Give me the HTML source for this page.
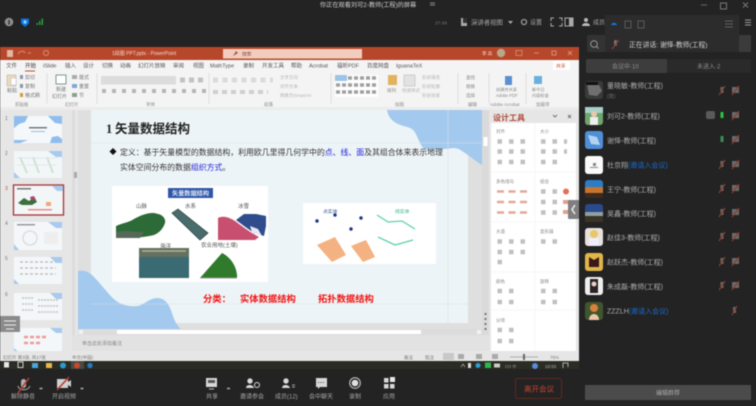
<!DOCTYPE html>
<html lang="zh-CN">
<head>
<meta charset="utf-8">
<title>会议屏幕共享</title>
<style>
html,body{margin:0;padding:0;width:756px;height:406px;overflow:hidden;background:#232323}
svg{display:block;filter:blur(.4px)}
text{font-family:"Liberation Sans","Noto Sans CJK SC",sans-serif}
.r{font-size:5px;fill:#777}
.t{font-size:5.5px;fill:#555}
.g{font-size:4.5px;fill:#888}
.w{font-size:6.2px;fill:#cfcfcf}
.l{font-size:6px;fill:#a8a8a8}
.n{font-size:7px;fill:#adadad}
.p{font-size:4.8px;fill:#777}
.i{fill:none;stroke:#c0c0c0;stroke-width:4.5;stroke-dasharray:4.500 7}
.c{fill:none;stroke:#e3a797;stroke-width:2.500;stroke-dasharray:7 4.500}
.x{stroke:#8f3a2e;stroke-width:1.200}
</style>
</head>
<body>
<svg width="756" height="406" viewBox="0 0 756 406" xmlns="http://www.w3.org/2000/svg">
<rect width="756" height="406" fill="#232323"/>

<!-- top bar -->
<text x="320" y="7" class="w">你正在观看刘可2-教师(工程)的屏幕</text>
<path d="M430 3h5M430 5h5" stroke="#aaa" stroke-width=".8"/>
<circle cx="9" cy="22" r="4.300" fill="#8d8d8d"/><rect x="8.400" y="20" width="1.400" height="4.500" fill="#333"/>
<path d="M21 18.500h8v5l-4 3.500-4-3.500z" fill="#0a72e0"/><circle cx="25" cy="22" r="1.700" fill="#9cf"/>
<path d="M36.500 25h1.500v-2h-1.500zM39 25h1.500v-4H39zM41.500 25H43v-6.500h-1.500z" fill="#21a33a"/>
<path d="M701 5h6" stroke="#666"/><rect x="720.500" y="3" width="6" height="6" fill="none" stroke="#777"/>
<path d="M743 2.500l5 5m0-5l-5 5" stroke="#777"/>
<text x="435" y="24.500" class="p">27:49</text>
<path d="M461 18h6v8h-6z" fill="#aaa"/><path d="M463 18h4v5h-4z" fill="#333"/>
<text x="471" y="24.500" class="l" style="font-size:6.400px">演讲者视图</text>
<path d="M508 21h5l-2.500 3z" fill="#aaa"/>
<circle cx="524" cy="22" r="2.500" fill="none" stroke="#999" stroke-width="1.300"/>
<text x="530" y="24.500" class="l">设置</text>
<path d="M551 21v-3h3M559 18h3v3M562 23v3h-3M554 26h-3v-3" fill="none" stroke="#aaa"/>
<rect x="565" y="18" width="8" height="8" fill="none" stroke="#aaa"/><rect x="569" y="18" width="4" height="8" fill="#aaa"/>
<circle cx="586" cy="20" r="2" fill="#bbb"/><path d="M582 26c0-4 8-4 8 0z" fill="#bbb"/>
<text x="593" y="24.500" class="l">成员</text>
<path d="M745 20h6M745 22.500h6M745 25h6" stroke="#999"/>

<!-- participant panel -->
<rect x="587" y="35" width="152" height="17" rx="2" fill="#333"/>
<circle cx="594" cy="44" r="3.300" fill="none" stroke="#999"/><path d="M596.500 46.500l2 2" stroke="#999"/>
<rect x="739" y="35" width="12" height="17" rx="1" fill="#3b3b3b"/>
<rect x="605" y="15" width="134" height="37" fill="#2c2c2c"/>
<path d="M611 25c1-3 5-3 6 0z" fill="#1177dd"/>
<rect x="625" y="21" width="6" height="7" fill="none" stroke="#5a5a5a"/>
<rect x="638" y="21" width="6" height="7" fill="none" stroke="#5a5a5a"/>
<path d="M725 21h8M725 24h8M725 27h8" stroke="#606060"/>
<rect x="614" y="40" width="3" height="6" rx="1.500" fill="#777"/><path d="M612 49l7-9" class="x"/>
<text x="629" y="47" style="font-size:6.800px;fill:#d0d0d0">正在讲话: 谢怿-教师(工程)</text>
<rect x="586" y="59" width="81" height="14" rx="1" fill="#3d3d3d"/>
<rect x="667" y="59" width="84" height="14" fill="#2a2a2a"/>
<text x="612" y="68.500" class="l" style="fill:#8f8f8f">会议中·10</text>
<text x="697" y="68.500" class="l" style="fill:#8f8f8f">未进入·2</text>

<!-- avatars -->
<rect x="585" y="81" width="18" height="18" rx="3" fill="#3a3a3a"/><path d="M587 84l12 1 3 6-5 5-8-1z" fill="#6f6f6f"/><path d="M586 82h12v3h-12z" fill="#111"/>
<rect x="585" y="107" width="18" height="18" rx="3" fill="#6ea66b"/><rect x="585" y="107" width="18" height="6" fill="#a9d0c8"/><circle cx="594" cy="114" r="3" fill="#e7c9ac"/><rect x="590" y="117" width="8" height="8" fill="#eee"/>
<rect x="585" y="131" width="18" height="18" rx="3" fill="#4f8fd8"/><path d="M588 135l9 2 3 8-9-1z" fill="#b3d2f2"/>
<rect x="585" y="156" width="18" height="18" rx="3" fill="#fafafa"/><path d="M590 167h8v1h-8zM593 163h3v3h-3z" fill="#888"/>
<rect x="585" y="180" width="18" height="18" rx="3" fill="#2c7cc6"/><rect x="585" y="187" width="18" height="6" fill="#c9742e"/><rect x="585" y="193" width="18" height="5" fill="#3a2a20"/>
<rect x="585" y="204" width="18" height="18" rx="3" fill="#2a4a8c"/><rect x="585" y="212" width="18" height="4" fill="#90a0a0"/><rect x="585" y="216" width="18" height="6" fill="#3a3424"/>
<rect x="585" y="228" width="18" height="18" rx="3" fill="#e8e2da"/><circle cx="594" cy="234" r="4" fill="#e8c76a"/><rect x="589" y="238" width="10" height="8" fill="#eef"/>
<rect x="585" y="253" width="18" height="18" rx="3" fill="#e0b64a"/><path d="M589 257l5 3 5-3v10h-10z" fill="#3a1a18"/>
<rect x="585" y="277" width="18" height="18" rx="3" fill="#eee"/><path d="M590 279h8v14h-8z" fill="#2a2225"/><circle cx="594" cy="284" r="2.500" fill="#e9cfc5"/>
<rect x="585" y="302" width="18" height="18" rx="3" fill="#40562e"/><circle cx="594" cy="308" r="4" fill="#d9803c"/><path d="M589 320c0-8 10-8 10 0z" fill="#edc8a8"/>

<!-- names -->
<text x="607" y="88" class="n">董晓敏-教师(工程)</text>
<text x="607" y="98" style="font-size:5px;fill:#6d6d6d">(我)</text>
<text x="607" y="118.500" class="n">刘可2-教师(工程)</text>
<text x="607" y="143" class="n">谢怿-教师(工程)</text>
<text x="607" y="167.500" class="n">杜京翔<tspan fill="#1a6bd0">(邀请入会议)</tspan></text>
<text x="607" y="192" class="n">王宁-教师(工程)</text>
<text x="607" y="216" class="n">吴鑫-教师(工程)</text>
<text x="607" y="240" class="n">赵佳3-教师(工程)</text>
<text x="607" y="264.500" class="n">赵跃杰-教师(工程)</text>
<text x="607" y="289" class="n">朱成磊-教师(工程)</text>
<text x="607" y="313.500" class="n">ZZZLH<tspan fill="#1a6bd0">(邀请入会议)</tspan></text>

<!-- mic and cam status -->
<g fill="#6a6a6a">
<rect x="720.500" y="87" width="3" height="6"/><rect x="720.500" y="136" width="3" height="6" fill="#3a8f50"/><rect x="720.500" y="161" width="3" height="6"/><rect x="720.500" y="185" width="3" height="6"/><rect x="720.500" y="209" width="3" height="6"/><rect x="720.500" y="233" width="3" height="6"/><rect x="720.500" y="258" width="3" height="6"/><rect x="720.500" y="282" width="3" height="6"/>
<rect x="720.500" y="112" width="3" height="6" fill="#27c43d"/><rect x="733" y="307" width="3" height="6"/>
<rect x="732" y="87" width="7" height="6"/><rect x="732" y="112" width="7" height="6"/><rect x="732" y="136" width="7" height="6"/><rect x="732" y="161" width="7" height="6"/><rect x="732" y="185" width="7" height="6"/><rect x="732" y="209" width="7" height="6"/><rect x="732" y="233" width="7" height="6"/><rect x="732" y="258" width="7" height="6"/><rect x="732" y="282" width="7" height="6"/>
<rect x="706" y="111" width="9" height="8" rx="2" fill="#5a5a5a"/>
</g>
<path class="x" d="M719 95l6-9M719 169l6-9M719 193l6-9M719 217l6-9M719 241l6-9M719 266l6-9M719 290l6-9M732 95l7-9M732 120l7-9M732 144l7-9M732 169l7-9M732 193l7-9M732 217l7-9M732 241l7-9M732 266l7-9M732 290l7-9M732 315l5-9"/>
<rect x="585" y="385" width="166" height="15" fill="#4b4b4b"/>
<text x="668" y="395" text-anchor="middle" class="l">编辑群荐</text>

<!-- PowerPoint window -->
<rect x="0" y="47" width="579" height="314" fill="#e6e6e6"/>
<rect x="0" y="47" width="579" height="13" fill="#b7472a"/>
<rect x="7" y="50" width="6" height="7" fill="#e5b5a5"/>
<path d="M18 54c2-4 6-3 7-1M28 53h3" fill="none" stroke="#d98f78"/><circle cx="46" cy="53" r="2.500" fill="none" stroke="#d98f78"/>
<text x="112" y="55" style="font-size:5px;fill:#f3d8cf">1段图 PPT.pptx  -  PowerPoint</text>
<rect x="223" y="49" width="139" height="9.500" fill="#f2cdbf"/>
<text x="242" y="55.500" style="font-size:4.800px;fill:#8a4a38">搜索</text>
<path d="M233 56l3-5 2 2z" fill="#a5573f"/>
<text x="482" y="55" style="font-size:4.500px;fill:#f3d8cf">李 高</text>
<circle cx="501" cy="53" r="4.200" fill="#b9a888"/>
<rect x="516" y="50.500" width="6" height="5" fill="none" stroke="#d98f78" stroke-width=".8"/>
<path d="M534 53h5M552 51h4v4h-4zM568 51l4 4m0-4l-4 4" fill="none" stroke="#dba08e" stroke-width=".8"/>
<rect x="0" y="60" width="579" height="47" fill="#f4f4f4"/>
<g>
<text x="6" y="67.500" class="t">文件</text><text x="25" y="67.500" class="t" style="fill:#333">开始</text><text x="43" y="67.500" class="t">iSlide</text><text x="65" y="67.500" class="t">插入</text><text x="83" y="67.500" class="t">设计</text><text x="102" y="67.500" class="t">切换</text><text x="120" y="67.500" class="t">动画</text><text x="138" y="67.500" class="t">幻灯片放映</text><text x="173" y="67.500" class="t">审阅</text><text x="193" y="67.500" class="t">视图</text><text x="210" y="67.500" class="t">MathType</text><text x="243" y="67.500" class="t">录制</text><text x="262" y="67.500" class="t">开发工具</text><text x="291" y="67.500" class="t">帮助</text><text x="309" y="67.500" class="t">Acrobat</text><text x="337" y="67.500" class="t">福昕PDF</text><text x="367" y="67.500" class="t">百度网盘</text><text x="396" y="67.500" class="t">IguanaTeX</text>
</g>
<rect x="25" y="70.500" width="10" height="1" fill="#c2492d"/>
<rect x="553" y="61" width="17" height="9" fill="#fff"/><text x="556" y="67.500" style="font-size:4.800px;fill:#c2492d">共享</text>

<!-- ribbon -->
<rect x="7" y="75" width="9" height="11" fill="#ecd9b8" stroke="#aaa" stroke-width=".5"/><rect x="11" y="78" width="5" height="7" fill="#fff" stroke="#bbb" stroke-width=".5"/>
<text x="7" y="92" class="r">粘贴</text>
<text x="25" y="79" class="r">剪切</text><text x="25" y="88" class="r">复制</text><text x="25" y="97" class="r">格式刷</text>
<rect x="20" y="75" width="3" height="4" fill="#89a"/><rect x="20" y="84" width="3" height="4" fill="#89a"/><rect x="20" y="93" width="3" height="4" fill="#d79a3c"/>
<rect x="56" y="75" width="10" height="9" fill="#fff" stroke="#7a9a8a"/>
<text x="56" y="91" class="r">新建</text><text x="52" y="98" class="r">幻灯片</text>
<text x="79" y="79" class="r">版式</text><text x="79" y="88" class="r">重置</text><text x="79" y="97" class="r">节</text>
<rect x="72" y="75" width="5" height="4" fill="#aaa"/><rect x="72" y="84" width="5" height="4" fill="#7aa9d2"/><rect x="72" y="93" width="5" height="4" fill="#8aa08a"/>
<rect x="101" y="76" width="75" height="8.500" fill="#dcdcdc"/>
<path d="M102 91h105" style="fill:none;stroke:#b5b5b5;stroke-width:4;stroke-dasharray:4 6"/>
<path d="M180 80h24" style="fill:none;stroke:#c2c2c2;stroke-width:5;stroke-dasharray:5 4"/>
<path d="M213 80h60" style="fill:none;stroke:#dadada;stroke-width:5;stroke-dasharray:5 4.500"/>
<path d="M213 92h55" style="fill:none;stroke:#cfcfcf;stroke-width:4;stroke-dasharray:5 4"/>
<text x="280" y="79" class="g" style="fill:#b5b5b5">文字方向</text><text x="280" y="88" class="g" style="fill:#b5b5b5">对齐文本</text><text x="280" y="97" class="g" style="fill:#b5b5b5">转换为SmartArt</text>
<rect x="335" y="75" width="43" height="22" fill="#fff"/>
<path d="M336 78h41M336 85h41M336 92h41" fill="none" stroke="#a0a0a0" stroke-width="3.500" stroke-dasharray="4 2"/><rect x="335" y="75" width="12" height="6" fill="#9cc4ea"/>
<rect x="388" y="75" width="9" height="10" fill="#e2b25c"/><rect x="404" y="75" width="11" height="11" fill="#e2e2e2" stroke="#bbb" stroke-width=".6"/>
<text x="387" y="92" class="g">排列</text><text x="402" y="92" class="g" style="fill:#b5b5b5">快速样式</text>
<text x="422" y="79" class="g" style="fill:#b5b5b5">形状填充</text><text x="422" y="88" class="g" style="fill:#b5b5b5">形状轮廓</text><text x="422" y="97" class="g" style="fill:#b5b5b5">形状效果</text>
<text x="466" y="79" class="g">查找</text><text x="466" y="88" class="g">替换</text><text x="466" y="97" class="g">选择</text>
<rect x="505" y="76" width="7" height="9" fill="#5a90d0"/><rect x="534" y="76" width="8" height="8" fill="#6ab0dd"/>
<text x="496" y="91" class="g" style="font-size:4.200px">创建并共享</text><text x="496" y="97" class="g" style="font-size:4.200px">Adobe PDF</text>
<text x="532" y="91" class="g" style="font-size:4.200px">新中日</text><text x="532" y="97" class="g" style="font-size:4.200px">内容检查</text>
<text x="15" y="106" class="g">剪贴板</text><text x="65" y="106" class="g">幻灯片</text><text x="146" y="106" class="g">字体</text><text x="264" y="106" class="g">段落</text><text x="395" y="106" class="g">绘图</text><text x="468" y="106" class="g">编辑</text><text x="490" y="106" class="g">Adobe Acrobat</text><text x="536" y="106" class="g">加载项</text>
<path d="M47 73v31M97 73v31M209 73v31M331 73v31M458 73v31M489 73v31M526 73v31" stroke="#d8d8d8" stroke-width=".7"/>
<rect x="0" y="107" width="579" height="3" fill="#ececec"/>

<!-- thumbnails -->
<rect x="72" y="110" width="3" height="240" fill="#dcdcdc"/><rect x="74" y="172" width="3" height="6" fill="#aaa"/>
<text x="5" y="120" style="font-size:5px;fill:#777">1</text><text x="5" y="155" style="font-size:5px;fill:#777">2</text><text x="5" y="190" style="font-size:5px;fill:#c2492d">3</text><text x="5" y="225" style="font-size:5px;fill:#777">4</text><text x="5" y="260" style="font-size:5px;fill:#777">5</text><text x="5" y="296" style="font-size:5px;fill:#777">6</text>
<rect x="14" y="116" width="48" height="27" fill="#f4f8fb"/><path d="M14 116h14l-3 6-6 2-5 4zM48 116h14v8l-7-1zM14 140h14l-8 3h-6zM50 143l2-6 6-1 4 3v4z" fill="#8fbdee"/><rect x="29" y="127" width="18" height="1.500" fill="#777"/><rect x="31" y="131" width="14" height="1" fill="#8fbdee"/>
<rect x="14" y="151" width="48" height="27" fill="#f2f6f7"/><path d="M48 151h14v6h-6zM14 172l6 6h-6z" fill="#a8caee"/><path d="M20 157l7 16M33 157l6 16M47 157l6 16" fill="none" stroke="#cfe3cf" stroke-width="2"/><path d="M17 158h40M17 165h40" stroke="#dde8ee" stroke-width="1"/>
<rect x="13.500" y="185" width="50" height="30" fill="#f2f6f7" stroke="#a3343a" stroke-width="1.300"/><rect x="17" y="188" width="14" height="1.500" fill="#777"/><path d="M52 186h11v5h-6z" fill="#a8caee"/><path d="M18 203l6-5 5 3 5-4 3 5-5 3h-10z" fill="#3c6f3e"/><path d="M30 197l4-1 2 4h-5z" fill="#a9456a"/><rect x="46" y="202" width="5" height="4" fill="#f0a878"/><rect x="28" y="209" width="24" height="1.500" fill="#f28a8a"/>
<rect x="14" y="222" width="48" height="28" fill="#f4f7f9"/><path d="M48 222h14v6h-6zM14 244l5 6h-5z" fill="#a8caee"/><rect x="17" y="224" width="18" height="1.500" fill="#999"/><circle cx="30" cy="238" r="7" fill="none" stroke="#ddd" stroke-width="1.500"/><rect x="44" y="232" width="14" height="12" fill="#eee"/>
<rect x="14" y="257" width="48" height="27" fill="#f4f7f9"/><path d="M50 257h12v6h-6zM14 279l5 5h-5z" fill="#a8caee"/><path d="M20 262h36M20 268h36M20 274h36" stroke="#c2c2c2" stroke-width="1.500" stroke-dasharray="3 2"/>
<rect x="14" y="293" width="48" height="27" fill="#f4f7f9"/><path d="M50 293h12v6h-6zM14 315l5 5h-5z" fill="#a8caee"/><path d="M22 298h12M22 304h12M22 310h12M38 300h20M38 306h20M38 312h20" stroke="#c2c2c2" stroke-width="1.500" stroke-dasharray="2 1"/>
<rect x="14" y="328" width="48" height="25" fill="#f4f7f9"/><path d="M50 328h12v5h-6zM14 348l6 5h-6z" fill="#a8caee"/><path d="M24 337h22M24 343h16" stroke="#eb9a9a" stroke-width="2.500" stroke-dasharray="4 2"/>
<rect x="0" y="316" width="20" height="16" fill="#8a8a8a"/><path d="M4 321h12M4 325h12M6 329h8" stroke="#eee"/>

<!-- slide -->
<rect x="78" y="110" width="404" height="219" fill="#dfdfdf"/>
<rect x="91" y="110" width="377" height="213" fill="#edf4f7"/>
<path d="M78 271c5-1 10 0 15 5 8 8 15 18 22 24 6 5 14 7 23 6 7-2 12-8 19-8 8 0 12 6 15 15 2 7 5 13 9 16H78z" fill="#a3c9ee"/>
<path d="M387 110c1 6 4 10 9 13 7 4 14 3 18 8 3 4 5 11 9 17 5 3 12 1 20 1 7 0 13-3 19 2 5 3 12 9 20 14v-55z" fill="#a3c9ee"/>
<path d="M91 143h391" stroke="#dde4e8" stroke-width=".6"/><path d="M91 304h377" stroke="#d8dfe3" stroke-width=".6"/><path d="M448 110v213" stroke="#d8e0e4" stroke-width=".6"/>
<text x="106" y="133" style="font-size:12.500px;font-weight:700;fill:#222;font-family:'Liberation Serif','Noto Sans CJK SC',serif">1</text>
<text x="115" y="133" style="font-size:12.500px;font-weight:700;fill:#222">矢量数据结构</text>
<path d="M113 148l3.500 3.500-3.500 3.500-3.500-3.500z" fill="#111"/>
<text x="120" y="155" style="font-size:7.880px;fill:#333">定义&#xFF1A;基于矢量模型的数据结构&#xFF0C;利用欧几里得几何学中的<tspan fill="#2222dd">点、线、面</tspan>及其组合体来表示地理</text>
<text x="120" y="170" style="font-size:7.880px;fill:#333">实体空间分布的数据<tspan fill="#2222dd">组织方式</tspan>。</text>

<rect x="112" y="186" width="156" height="96" fill="#fff"/>
<rect x="168" y="188" width="45" height="10" fill="#2f57a8"/>
<text x="190.500" y="195.500" text-anchor="middle" style="font-size:6.200px;fill:#dfe6f5;font-weight:700">矢量数据结构</text>
<text x="136" y="208" style="font-size:5.500px;fill:#555">山脉</text><text x="185" y="208" style="font-size:5.500px;fill:#555">水系</text><text x="238" y="208" style="font-size:5.500px;fill:#555">冰雪</text><text x="160" y="248" style="font-size:5.500px;fill:#555">海洋</text><text x="201" y="247" style="font-size:5.500px;fill:#555">农业用地(土壤)</text>
<path d="M116 226c6-3 12-3 18-7 7-4 17-8 24-5 5 1 8 5 7 9-2 6-6 10-11 12-12 3-26 3-38 3z" fill="#2c6a37"/><path d="M116 232c8-2 18 0 28 0l-4 6h-24z" fill="#57685a"/>
<path d="M172 213l6-4 30 24-8 7z" fill="#486d6c" stroke="#2c3a3a" stroke-width=".7"/>
<path d="M218 218c6-3 12 0 17 3 8 6 16 12 24 16l-4 3h-37z" fill="#c84f70"/><path d="M236 220l8-6 12 0 10 2v10l-2 10-10-3-10-7z" fill="#2f4d8c"/><path d="M250 226l8 3 4 7-10-4z" fill="#e8e8f4"/>
<rect x="139" y="248" width="50" height="30" fill="#3a6a72"/><rect x="139" y="248" width="50" height="9" fill="#66705e"/><path d="M142 251h44" stroke="#b0b2a0" stroke-width="1.500"/>
<path d="M200 278l22-25c8 4 14 12 15 22v3z" fill="#2f7a2b"/><path d="M200 278h37" stroke="#999"/>

<rect x="303" y="203" width="133" height="61" rx="1" fill="#fff"/>
<text x="323" y="213" style="font-size:4.800px;fill:#3a5a9a">点实体</text><text x="395" y="213" style="font-size:4.800px;fill:#3ab58a">线实体</text>
<g fill="#1d3580"><circle cx="317" cy="221" r="1.700"/><circle cx="335" cy="215" r="1.700"/><circle cx="361" cy="218" r="1.700"/><circle cx="351" cy="229" r="1.700"/></g>
<path d="M377 215l11 7 14-1 13 8M378 237l17 8 18-5" fill="none" stroke="#5fd0a8" stroke-width="1.300"/>
<path d="M317 245l18-8 11 18-14 7z" fill="#f4b181"/><path d="M351 246l15-6 9 17-12 5z" fill="#f4b181"/>

<text x="203" y="302" style="font-size:9.300px;font-weight:700;fill:#f01414">分类&#xFF1A;</text>
<text x="240" y="302" style="font-size:9.300px;font-weight:700;fill:#f01414">实体数据结构</text>
<text x="318" y="302" style="font-size:9.300px;font-weight:700;fill:#f01414">拓扑数据结构</text>

<!-- scrollbars, notes -->
<rect x="78" y="329" width="404" height="6" fill="#dcdcdc"/><rect x="117" y="330" width="304" height="4" fill="#fff"/>
<rect x="79" y="330" width="4" height="4" fill="#f2f2f2"/><rect x="477" y="330" width="4" height="4" fill="#f2f2f2"/>
<rect x="482" y="110" width="7" height="241" fill="#dadada"/><rect x="483.500" y="137" width="4" height="9" fill="#fff"/>
<path d="M485.500 313v17" stroke="#777" stroke-width="2" stroke-dasharray="2 3"/>
<rect x="72" y="335" width="417" height="16" fill="#e2e2e2"/>
<text x="82" y="345" style="font-size:5px;fill:#888">单击此处添加备注</text>

<!-- design panel -->
<rect x="489" y="110" width="90" height="241" fill="#e6e6e6"/>
<text x="493" y="120.500" style="font-size:8px;font-weight:700;fill:#b04a38">设计工具</text>
<path d="M553 115l2 2 2-2M568 115l3 3m0-3l-3 3" fill="none" stroke="#777"/>
<rect x="491" y="123" width="85" height="228" fill="#fff"/>
<path d="M491 172h85M491 222h85M491 272h85M491 310h85M535 123v228" stroke="#f0f0f0" stroke-width=".6"/>
<text x="496" y="133" class="g">对齐</text><text x="540" y="133" class="g">大小</text><text x="496" y="183" class="g">多色线与</text><text x="540" y="183" class="g">组合</text><text x="496" y="233" class="g">大道</text><text x="540" y="233" class="g">变形器</text><text x="496" y="283" class="g">颜色</text><text x="540" y="283" class="g">旋转</text><text x="496" y="322" class="g">分项</text>
<path class="i" d="M497.500 141.500h32M497.500 151.500h32M497.500 162h32M541 141.500h26M541 151.500h26M541 162h16M497.500 241.500h32M497.500 252h32M497.500 262h8M541 241.500h16M497.500 291h20M497.500 302h20M541 291h20M541 302h20M497.500 330h20M497.500 341h20"/>
<path class="c" d="M497 191.500h32M497 202h32M497 212.500h32"/>
<path class="i" d="M541 191.500h20M541 202h20M541 212.500h20"/>
<circle cx="566" cy="191.500" r="3" fill="#e0705c"/><rect x="563" y="200" width="6" height="4" fill="#e0a090"/><rect x="563" y="210" width="6" height="4" fill="#e0a090"/>
<rect x="568" y="200" width="11" height="19" rx="1" fill="#7f7f7f"/><path d="M575 205l-3 4.500 3 4.500" fill="none" stroke="#eee" stroke-width="1.500"/>

<!-- status bar -->
<rect x="0" y="351" width="579" height="10" fill="#e6e6e6"/>
<text x="3" y="359" style="font-size:4.500px;fill:#777">幻灯片 第3张, 共17张</text>
<text x="72" y="359" style="font-size:4.500px;fill:#777">中文(中国)</text>
<text x="404" y="359" style="font-size:4.500px;fill:#777">备注</text><text x="425" y="359" style="font-size:4.500px;fill:#777">批注</text>
<rect x="443" y="353" width="11" height="7" fill="#c8c8c8"/><rect x="458" y="354" width="6" height="5" fill="#aaa"/><rect x="476" y="354" width="6" height="5" fill="#aaa"/><rect x="492" y="354" width="6" height="5" fill="#aaa"/>
<path d="M510 357h28" stroke="#999" stroke-width=".7"/><rect x="523" y="354" width="2" height="6" fill="#666"/>
<text x="550" y="359" style="font-size:4.500px;fill:#777">75%</text>

<!-- taskbar -->
<rect x="0" y="361" width="579" height="8" fill="#2b2d24"/>
<rect x="4" y="362" width="5" height="5.500" fill="#e8e8e8"/><rect x="18" y="362" width="5" height="5.500" fill="none" stroke="#ccc"/>
<rect x="32" y="363" width="6" height="5" fill="#4aa6d8"/><rect x="46" y="363" width="6" height="5" fill="#e8b84a"/><circle cx="63" cy="365.500" r="3" fill="#2a9ad0"/>
<rect x="71" y="361" width="13" height="8" fill="#4a4a44"/><circle cx="77" cy="365.500" r="3" fill="#c8492a"/><circle cx="90" cy="365.500" r="2.700" fill="#2a78c0"/>
<path d="M461 367l2-3 2 3" fill="none" stroke="#aaa" stroke-width=".7"/><rect x="468" y="363" width="3" height="5" fill="#ddd"/><circle cx="478" cy="365.500" r="2.500" fill="#2aa0d8"/><rect x="485" y="362.500" width="6" height="5.500" fill="#2cb84a"/><rect x="494" y="363.500" width="6" height="4" fill="#ccc"/>
<text x="505" y="368" style="font-size:4.200px;fill:#999">CH 中</text>
<circle cx="535" cy="366" r="3" fill="#5a8ad8"/><text x="545" y="368" style="font-size:4.500px;fill:#aaa">18:55</text><path d="M563 368v-5h5v4" fill="none" stroke="#ccc" stroke-width=".8"/>

<!-- bottom toolbar -->
<rect x="0" y="369" width="580" height="37" fill="#232323"/>
<rect x="21" y="379" width="5" height="9" rx="2.500" fill="#b0b0b0"/><path d="M18 386c1 5 10 5 12 0" fill="none" stroke="#b0b0b0"/><path d="M18 393l11-15" stroke="#b8392b" stroke-width="1.500"/>
<path d="M39.500 388.500h3" stroke="#aaa" stroke-width="1.500"/>
<text x="11" y="398.500" class="l">解除静音</text>
<rect x="57" y="379" width="11" height="9" fill="#d0d0d0"/><path d="M68 382l3-2v7l-3-2z" fill="#d0d0d0"/><path d="M57 390l12-13" stroke="#b8392b" stroke-width="1.500"/>
<path d="M80.500 388.500h3" stroke="#aaa" stroke-width="1.500"/>
<text x="52" y="398.500" class="l">开启视频</text>
<rect x="206" y="378" width="11" height="9" fill="#d8d8d8"/><rect x="208" y="380" width="7" height="3" fill="#555"/><path d="M209 389h5" stroke="#bbb"/>
<path d="M227 388.500h3" stroke="#aaa" stroke-width="1.500"/><text x="206" y="398.500" class="l">共享</text>
<circle cx="250" cy="381" r="2.700" fill="#d8d8d8"/><path d="M246 388c0-4 7-4 8 0z" fill="#d8d8d8"/><circle cx="257" cy="385" r="2.500" fill="none" stroke="#d8d8d8"/>
<text x="240" y="398.500" class="l">邀请参会</text>
<circle cx="286" cy="381" r="2.700" fill="#d8d8d8"/><path d="M282 388c0-4 7-4 8 0z" fill="#d8d8d8"/><path d="M292 385h3M292 387h3" stroke="#ccc" stroke-width=".8"/>
<text x="275" y="398.500" class="l">成员(12)</text>
<path d="M316 378h11v9h-7l-2 2v-2h-2z" fill="#d8d8d8"/><path d="M318 382.500h7" stroke="#444" stroke-dasharray="1 1.300"/>
<text x="309" y="398.500" class="l">会中聊天</text>
<circle cx="355" cy="383" r="5.300" fill="none" stroke="#bbb" stroke-width="1.200"/><circle cx="355" cy="383" r="3.300" fill="#e0e0e0"/>
<text x="349" y="398.500" class="l">录制</text>
<rect x="384" y="378" width="4.500" height="4.500" fill="#d8d8d8"/><rect x="390" y="377" width="5" height="5" fill="#e8e8e8"/><rect x="384" y="384" width="4.500" height="4.500" fill="#d8d8d8"/><rect x="390" y="384" width="4.500" height="4.500" fill="#d8d8d8"/>
<text x="383" y="398.500" class="l">应用</text>
<rect x="515.500" y="378.500" width="46" height="20" rx="2" fill="none" stroke="#5e2a22"/>
<text x="524" y="391.500" style="font-size:7.500px;fill:#c8452f">离开会议</text>
</svg>
</body>
</html>
